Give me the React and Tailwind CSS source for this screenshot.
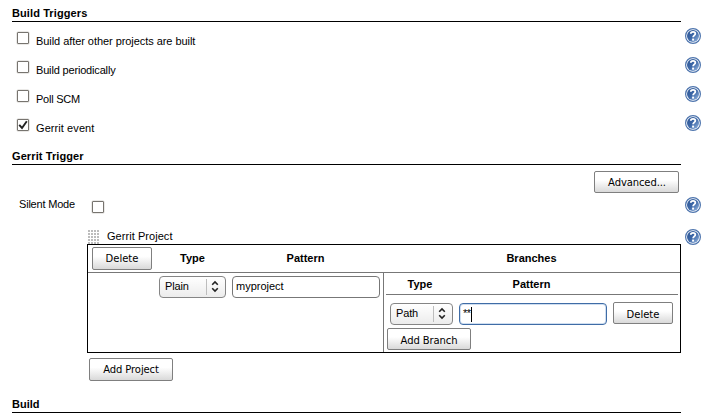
import React from "react";

function Help({ className = "" }) {
  return (
    <svg viewBox="0 0 16 16" className={"h-4 w-4 shrink-0 " + className}>
      <defs>
        <linearGradient id="helpFill" x1="0" y1="0" x2="1" y2="1">
          <stop offset="0" stopColor="#2c5594" />
          <stop offset="0.5" stopColor="#3d68a8" />
          <stop offset="1" stopColor="#9dbce3" />
        </linearGradient>
      </defs>
      <circle cx="8" cy="8" r="7.4" fill="#fff" stroke="#4d74ad" strokeWidth="1.2" />
      <circle cx="8" cy="8" r="6" fill="url(#helpFill)" />
      <path
        d="M5.8 5.7 C5.8 3.3 10.3 3.3 10.3 5.7 C10.3 7.4 8.1 7.4 8.1 9.3"
        fill="none"
        stroke="#fff"
        strokeWidth="1.8"
      />
      <rect x="7.1" y="10.6" width="2" height="2" fill="#fff" />
    </svg>
  );
}

function Check({ checked }) {
  return (
    <span className="flex h-3 w-3 shrink-0 items-center justify-center rounded-[1px] border border-[#77746f] bg-white shadow-[0_0_0_0.5px_#d5d3d0]">
      {checked && (
        <svg viewBox="0 0 10 10" className="h-[10px] w-[10px]">
          <path d="M1.2 4.8 L4 8 L8.8 1.2" fill="none" stroke="#222" strokeWidth="1.9" />
        </svg>
      )}
    </span>
  );
}

function Heading({ children, className = "" }) {
  return (
    <div
      className={
        "ml-3 h-4 w-[669px] shrink-0 border-b border-black text-[11px] leading-[15px] font-bold " + className
      }
    >
      {children}
    </div>
  );
}

function Button({ className = "", children }) {
  return (
    <button
      className={
        "block shrink-0 rounded-[2px] border border-[#7f7f7f] bg-linear-to-b from-white from-40% to-[#d9d9d9] text-center font-['DejaVu_Sans',sans-serif] text-[10px] leading-[22px] whitespace-nowrap " +
        className
      }
    >
      {children}
    </button>
  );
}

function Select({ className = "", children }) {
  return (
    <div
      className={
        "flex h-[22px] shrink-0 items-center rounded-[4px] border border-[#858585] bg-linear-to-b from-white to-[#ececec] pl-[5px] text-[11px] leading-5 " +
        className
      }
    >
      <span className="-mt-[2px] flex-1 tracking-[-0.15px]">{children}</span>
      <span className="h-4 w-px bg-[#bdbdbd]" />
      <svg viewBox="0 0 18 20" className="h-5 w-[18px]">
        <path d="M5.2 7.8 L8 5 L10.8 7.8 M5.2 11.2 L8 14 L10.8 11.2" fill="none" stroke="#222" strokeWidth="1.6" />
      </svg>
    </div>
  );
}

const triggers = [
  { label: "Build after other projects are built", spacing: "tracking-[-0.06px]" },
  { label: "Build periodically", spacing: "tracking-[-0.17px]" },
  { label: "Poll SCM", spacing: "tracking-[-0.25px]" },
  { label: "Gerrit event", spacing: "tracking-[0.08px]", checked: true },
];

export default function App() {
  return (
    <div className="flex h-[413px] w-[707px] flex-col overflow-hidden bg-white pt-1.5 font-['Liberation_Sans',Arial,sans-serif] text-[11px] text-black">
      <Heading className="tracking-[0.1px]">Build Triggers</Heading>
      <div className="mb-[5px] pt-[6px]">
        {triggers.map((t) => (
          <div key={t.label} className="flex h-[29px] items-start pl-[17px]">
            <div className="pt-1">
              <Check checked={t.checked} />
            </div>
            <span className={"ml-[7px] flex-1 pt-[6px] leading-[15px] " + t.spacing}>{t.label}</span>
            <Help className="mr-1.5" />
          </div>
        ))}
      </div>
      <Heading className="tracking-[0.1px]">Gerrit Trigger</Heading>
      <div className="flex h-8 justify-end pt-[6px] pr-7">
        <Button className="h-[22px] w-[85px] pl-px tracking-[-0.1px]">Advanced...</Button>
      </div>
      <div className="flex h-8 items-start pl-[19px]">
        <span className="w-[73px] leading-[15px] tracking-[-0.2px]">Silent Mode</span>
        <div className="pt-1">
          <Check />
        </div>
        <Help className="mr-1.5 ml-auto" />
      </div>
      <div className="flex h-[15px] items-start pl-[88px]">
        <span className="mt-[1px] h-[14px] w-3 bg-[radial-gradient(circle_at_1px_1px,#bbb_0.7px,transparent_1.2px)] bg-[length:3px_3px]" />
        <span className="ml-[7px] leading-[15px] tracking-[0.05px]">Gerrit Project</span>
        <Help className="mr-1.5 ml-auto" />
      </div>
      <div className="ml-[87px] flex h-[109px] w-[594px] shrink-0 flex-col border border-black">
        <div className="flex h-7 shrink-0 border-b border-[#777] font-bold leading-[26px]">
          <div className="w-[71px] pt-[2px] pl-1">
            <Button className="h-[23px] w-[60px] font-normal">Delete</Button>
          </div>
          <div className="w-[67px] text-center">Type</div>
          <div className="w-[159px] text-center">Pattern</div>
          <div className="flex-1 pr-[2px] text-center">Branches</div>
        </div>
        <div className="flex flex-1">
          <div className="flex w-[296px] shrink-0 items-start gap-1.5 border-r border-[#777] pt-[3px] pl-[71px]">
            <Select className="w-[67px]">Plain</Select>
            <div className="h-[22px] w-[148px] shrink-0 rounded-[4px] border border-[#777] pl-[3px] leading-[19px]">
              myproject
            </div>
          </div>
          <div className="flex flex-1 flex-col">
            <div className="mr-[2px] ml-[2px] flex h-[22px] shrink-0 border-b border-[#777] font-bold leading-[23px]">
              <div className="w-[68px] text-center">Type</div>
              <div className="w-[155px] text-center">Pattern</div>
            </div>
            <div className="mt-2 flex h-[25px] shrink-0 items-start gap-1.5 pl-1.5">
              <Select className="w-[63px]">Path</Select>
              <div className="flex h-[22px] w-[148px] shrink-0 items-center rounded-[4px] border border-[#3f6ca6] pl-[3px] leading-5 shadow-[inset_0_0_0_1px_#cfdef0]">
                <span className="-mt-[2px] tracking-[-0.5px]">**</span>
                <span className="h-[15px] w-px bg-black" />
              </div>
              <Button className="-mt-px h-[22px] w-[60px] leading-[23px]">Delete</Button>
            </div>
            <Button className="ml-[3px] h-[22px] w-[84px] leading-[23px] tracking-[-0.1px]">Add Branch</Button>
          </div>
        </div>
      </div>
      <div className="h-[44px] shrink-0 pt-[5px] pl-[89px]">
        <Button className="h-[23px] w-[84px] tracking-[-0.1px]">Add Project</Button>
      </div>
      <Heading>Build</Heading>
    </div>
  );
}
